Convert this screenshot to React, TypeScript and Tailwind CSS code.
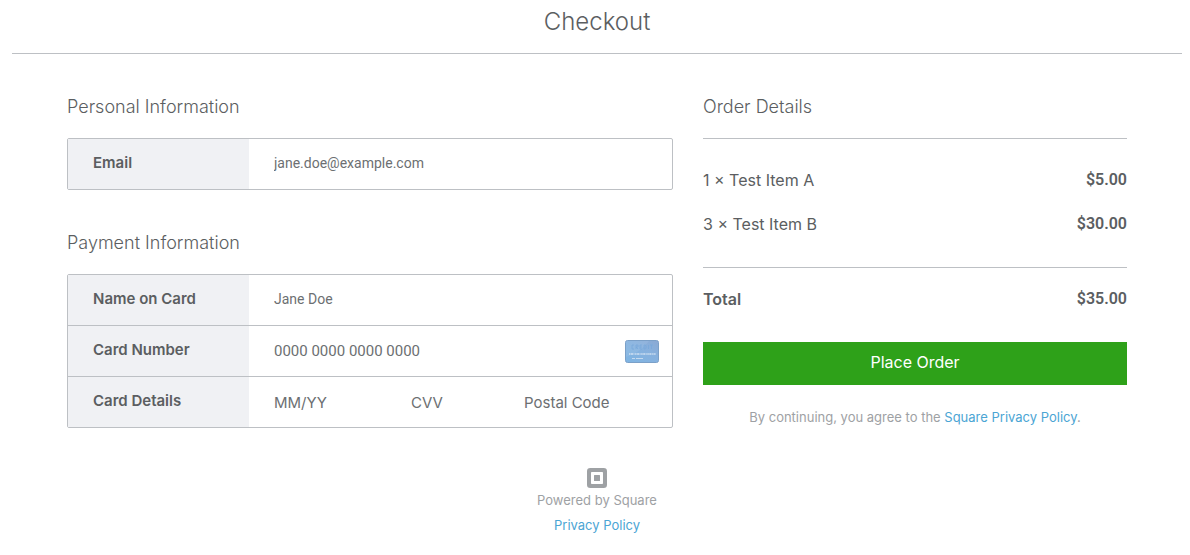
import type { InputHTMLAttributes, ReactNode } from "react";

const items = [
  { quantity: 1, name: "Test Item A", price: "$5.00" },
  { quantity: 3, name: "Test Item B", price: "$30.00" },
];

function SectionTitle({ children }: { children: ReactNode }) {
  return <h2 className="text-lg leading-8 font-light">{children}</h2>;
}

function FieldRow({ label, htmlFor, children }: { label: string; htmlFor: string; children: ReactNode }) {
  return (
    <div className="flex">
      <label
        htmlFor={htmlFor}
        className="h-[50px] w-[181px] shrink-0 bg-[#f0f1f4] pl-[25px] text-[15px] leading-[48px] font-semibold"
      >
        {label}
      </label>
      <div className="flex min-w-0 flex-1 items-center pr-[13px] pl-[25px]">{children}</div>
    </div>
  );
}

function TextInput({ className = "", ...rest }: InputHTMLAttributes<HTMLInputElement> & { className?: string }) {
  return (
    <input
      type="text"
      className={`h-full min-w-0 bg-transparent outline-none placeholder:text-[#6c6f72] placeholder:opacity-100 ${className}`}
      {...rest}
    />
  );
}

function CardIcon() {
  return (
    <svg width="34" height="23" viewBox="0 0 34 23" className="shrink-0" aria-hidden="true">
      <defs>
        <linearGradient id="card-face" x1="0" y1="1" x2="1" y2="0">
          <stop offset="0" stopColor="#7fb5e3" />
          <stop offset="0.6" stopColor="#87b1de" />
          <stop offset="1" stopColor="#8ba9d3" />
        </linearGradient>
      </defs>
      <rect x="0.5" y="0.5" width="33" height="22" rx="2" fill="url(#card-face)" stroke="#7ba0c8" />
      <path d="M1 1H24C18 9 10 14 1 17Z" fill="#ffffff" opacity="0.08" />
      <path
        d="M9 5H7V9H9M11 9V5H13V7H11L13 9M17 5H15V9H17M15 7H17M19 5V9H20.500L21 8V6L20.500 5ZM23.500 5V9M25 5H28M26.500 5V9"
        fill="none"
        stroke="#79a8da"
        strokeWidth="0.8"
      />
      <path d="M4 14H31" stroke="#cfe0f2" strokeWidth="1.600" strokeDasharray="1.500 0.500 2 0.500 1 0.600" />
      <path d="M7 18.500H10M11 18.500H18" stroke="#c5daef" strokeWidth="1" />
    </svg>
  );
}

function SquareLogo() {
  return (
    <svg width="20" height="20" viewBox="0 0 20 20" role="img" aria-label="Square">
      <path
        fill="#9ea1a4"
        fillRule="evenodd"
        d="M3.300 0H16.700A3.300 3.300 0 0 1 20 3.300V16.700A3.300 3.300 0 0 1 16.700 20H3.300A3.300 3.300 0 0 1 0 16.700V3.300A3.300 3.300 0 0 1 3.300 0ZM4.800 4A.8.8 0 0 0 4 4.800V15.200A.8.8 0 0 0 4.800 16H15.200A.8.8 0 0 0 16 15.200V4.800A.8.8 0 0 0 15.200 4ZM7.600 7H12.400A.6.6 0 0 1 13 7.600V12.400A.6.6 0 0 1 12.400 13H7.600A.6.6 0 0 1 7 12.400V7.600A.6.6 0 0 1 7.600 7Z"
      />
    </svg>
  );
}

export default function App() {
  return (
    <div className="bg-white pr-2 pl-3 font-['Inter','Liberation_Sans',sans-serif] text-[#5b5e61]">
      <header className="h-[54px] border-b border-[#bdc0c4] text-center">
        <h1 className="text-2xl leading-[44px] font-light">Checkout</h1>
      </header>

      <main className="grid grid-cols-[minmax(0,606fr)_minmax(0,424fr)] gap-[30px] px-[55px] pt-[37px]">
        <form id="checkout" onSubmit={(e) => e.preventDefault()}>
          <SectionTitle>Personal Information</SectionTitle>
          <div className="mt-[15px] rounded-xs border border-[#bdc0c4]">
            <FieldRow label="Email" htmlFor="email">
              <TextInput
                id="email"
                type="email"
                placeholder="jane.doe@example.com"
                className="w-full pb-0.5 font-['Roboto',sans-serif] text-sm"
              />
            </FieldRow>
          </div>

          <div className="mt-[37px]">
            <SectionTitle>Payment Information</SectionTitle>
          </div>
          <div className="mt-[15px] divide-y divide-[#bdc0c4] rounded-xs border border-[#bdc0c4]">
            <FieldRow label="Name on Card" htmlFor="name">
              <TextInput id="name" placeholder="Jane Doe" className="w-full pb-0.5 font-['Roboto',sans-serif] text-sm" />
            </FieldRow>
            <FieldRow label="Card Number" htmlFor="number">
              <TextInput
                id="number"
                placeholder="0000 0000 0000 0000"
                className="flex-1 font-['Roboto',sans-serif] text-[15px]"
              />
              <CardIcon />
            </FieldRow>
            <FieldRow label="Card Details" htmlFor="expiry">
              <TextInput id="expiry" placeholder="MM/YY" className="w-[137px] text-[15px]" />
              <TextInput aria-label="CVV" placeholder="CVV" className="w-[113px] text-[15px]" />
              <TextInput aria-label="Postal Code" placeholder="Postal Code" className="flex-1 text-[15px]" />
            </FieldRow>
          </div>
        </form>

        <section>
          <SectionTitle>Order Details</SectionTitle>
          <ul className="mt-[15px] border-y border-[#bdc0c4] pt-[19px] pb-[21px]">
            {items.map((item) => (
              <li key={item.name} className="flex h-11 items-center justify-between">
                <span>
                  {item.quantity} × {item.name}
                </span>
                <span className="font-['Roboto',sans-serif] font-semibold">{item.price}</span>
              </li>
            ))}
          </ul>
          <div className="mt-[19px] flex justify-between font-semibold">
            <span>Total</span>
            <span className="font-['Roboto',sans-serif]">$35.00</span>
          </div>
          <button type="submit" form="checkout" className="mt-[31px] h-[43px] w-full bg-[#2ea119] pb-[3px] text-white">
            Place Order
          </button>
          <p className="mt-[22px] text-center text-[13px] leading-5 text-[#9ea1a4]">
            By continuing, you agree to the{" "}
            <a href="#privacy" className="text-[#4ba5d4]">
              Square Privacy Policy
            </a>
            .
          </p>
        </section>
      </main>

      <footer className="mt-10 flex flex-col items-center text-[13px] leading-[25px] text-[#9ea1a4]">
        <SquareLogo />
        <p>Powered by Square</p>
        <a href="#privacy" className="text-[#4ba5d4]">
          Privacy Policy
        </a>
      </footer>
    </div>
  );
}
